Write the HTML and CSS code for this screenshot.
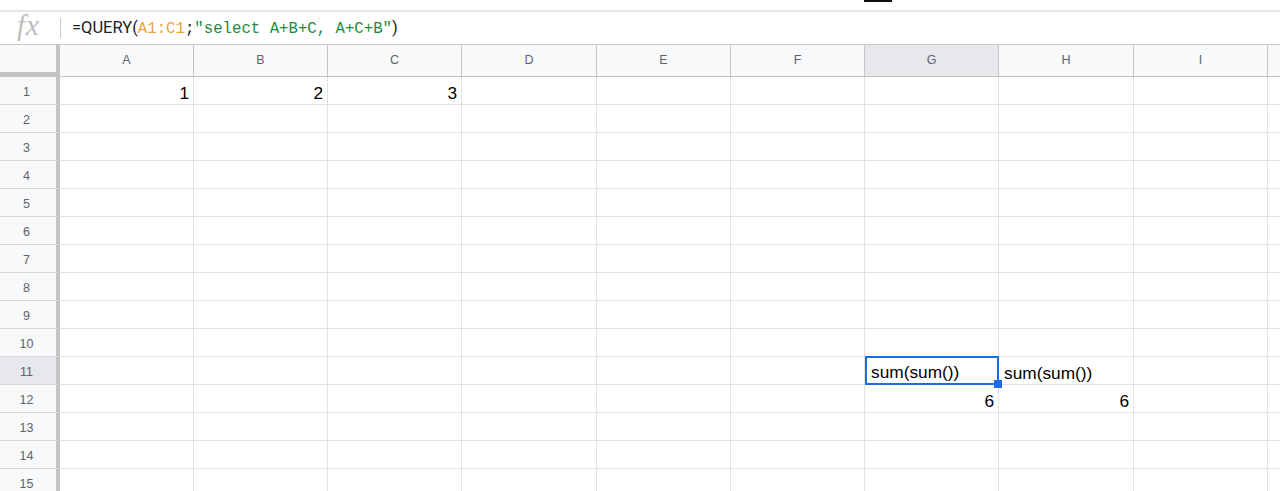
FILE: index.html
```html
<!DOCTYPE html>
<html>
<head>
<meta charset="utf-8">
<link rel="stylesheet" href="styles.css">
</head>
<body>
<div class="top"><div class="mark"></div></div>
<div class="fbar">
  <span class="fx">fx</span>
  <span class="sep"></span>
  <span class="formula">=QUERY(<span class="mono ref">A1:C1</span><span class="mono">;</span><span class="mono str">"select A+B+C, A+C+B"</span>)</span>
</div>
<div class="sheet">
  <div class="row hdr">
    <div class="corner"></div>
    <div class="ch">A</div><div class="ch">B</div><div class="ch">C</div><div class="ch w">D</div><div class="ch">E</div><div class="ch">F</div><div class="ch sel">G</div><div class="ch w">H</div><div class="ch">I</div><div class="ch last"></div>
  </div>
  <div class="row"><div class="rh">1</div><div class="c num">1</div><div class="c num">2</div><div class="c num">3</div><div class="c w"></div><div class="c"></div><div class="c"></div><div class="c"></div><div class="c w"></div><div class="c"></div><div class="c last"></div></div>
  <div class="row"><div class="rh">2</div><div class="c"></div><div class="c"></div><div class="c"></div><div class="c w"></div><div class="c"></div><div class="c"></div><div class="c"></div><div class="c w"></div><div class="c"></div><div class="c last"></div></div>
  <div class="row"><div class="rh">3</div><div class="c"></div><div class="c"></div><div class="c"></div><div class="c w"></div><div class="c"></div><div class="c"></div><div class="c"></div><div class="c w"></div><div class="c"></div><div class="c last"></div></div>
  <div class="row"><div class="rh">4</div><div class="c"></div><div class="c"></div><div class="c"></div><div class="c w"></div><div class="c"></div><div class="c"></div><div class="c"></div><div class="c w"></div><div class="c"></div><div class="c last"></div></div>
  <div class="row"><div class="rh">5</div><div class="c"></div><div class="c"></div><div class="c"></div><div class="c w"></div><div class="c"></div><div class="c"></div><div class="c"></div><div class="c w"></div><div class="c"></div><div class="c last"></div></div>
  <div class="row"><div class="rh">6</div><div class="c"></div><div class="c"></div><div class="c"></div><div class="c w"></div><div class="c"></div><div class="c"></div><div class="c"></div><div class="c w"></div><div class="c"></div><div class="c last"></div></div>
  <div class="row"><div class="rh">7</div><div class="c"></div><div class="c"></div><div class="c"></div><div class="c w"></div><div class="c"></div><div class="c"></div><div class="c"></div><div class="c w"></div><div class="c"></div><div class="c last"></div></div>
  <div class="row"><div class="rh">8</div><div class="c"></div><div class="c"></div><div class="c"></div><div class="c w"></div><div class="c"></div><div class="c"></div><div class="c"></div><div class="c w"></div><div class="c"></div><div class="c last"></div></div>
  <div class="row"><div class="rh">9</div><div class="c"></div><div class="c"></div><div class="c"></div><div class="c w"></div><div class="c"></div><div class="c"></div><div class="c"></div><div class="c w"></div><div class="c"></div><div class="c last"></div></div>
  <div class="row"><div class="rh">10</div><div class="c"></div><div class="c"></div><div class="c"></div><div class="c w"></div><div class="c"></div><div class="c"></div><div class="c"></div><div class="c w"></div><div class="c"></div><div class="c last"></div></div>
  <div class="row"><div class="rh sel">11</div><div class="c"></div><div class="c"></div><div class="c"></div><div class="c w"></div><div class="c"></div><div class="c"></div><div class="c active">sum(sum())<span class="handle"></span></div><div class="c w">sum(sum())</div><div class="c"></div><div class="c last"></div></div>
  <div class="row"><div class="rh">12</div><div class="c"></div><div class="c"></div><div class="c"></div><div class="c w"></div><div class="c"></div><div class="c"></div><div class="c num">6</div><div class="c w num">6</div><div class="c"></div><div class="c last"></div></div>
  <div class="row"><div class="rh">13</div><div class="c"></div><div class="c"></div><div class="c"></div><div class="c w"></div><div class="c"></div><div class="c"></div><div class="c"></div><div class="c w"></div><div class="c"></div><div class="c last"></div></div>
  <div class="row"><div class="rh">14</div><div class="c"></div><div class="c"></div><div class="c"></div><div class="c w"></div><div class="c"></div><div class="c"></div><div class="c"></div><div class="c w"></div><div class="c"></div><div class="c last"></div></div>
  <div class="row"><div class="rh">15</div><div class="c"></div><div class="c"></div><div class="c"></div><div class="c w"></div><div class="c"></div><div class="c"></div><div class="c"></div><div class="c w"></div><div class="c"></div><div class="c last"></div></div>
</div>
</body>
</html>
```
FILE: styles.css
```css
* { box-sizing: border-box; }
html, body {
  margin: 0;
  padding: 0;
  background: #fff;
  width: 1280px;
  height: 491px;
  overflow: hidden;
  font-family: "Liberation Sans", Arial, sans-serif;
}
.top {
  height: 12px;
  border-bottom: 2px solid #e6e6e6;
}
.mark {
  margin-left: 864px;
  width: 28px;
  height: 2px;
  background: #111;
}
.fbar {
  height: 32px;
  display: flex;
  align-items: center;
}
.fx {
  font-family: "Liberation Serif", "Times New Roman", serif;
  font-style: italic;
  font-size: 29px;
  color: #bcbcbc;
  width: 60px;
  padding-left: 17px;
  line-height: 1;
  margin-top: -5px;
  letter-spacing: 1px;
}
.sep {
  width: 1px;
  height: 20px;
  background: #c8c8c8;
}
.formula {
  margin-left: 11px;
  font-family: Roboto, "Liberation Sans", sans-serif;
  font-size: 16.5px;
  color: #202124;
  white-space: nowrap;
}
.mono {
  font-family: "Liberation Mono", "DejaVu Sans Mono", monospace;
  font-size: 15.7px;
}
.ref { color: #eaa43a; }
.str { color: #1f8a3c; }
.sheet {
  border-top: 1px solid #c8c8c8;
}
.row {
  display: flex;
  height: 28px;
}
.row.hdr { height: 32px; }
.corner {
  width: 60px;
  flex: none;
  background: #f8f9fa;
  border-right: 4px solid #c4c4c4;
  border-bottom: 5px solid #c4c4c4;
}
.ch {
  width: 134px;
  flex: none;
  background: #f8f9fa;
  border-right: 1px solid #c4c4c4;
  border-bottom: 1px solid #c4c4c4;
  display: flex;
  align-items: center;
  justify-content: center;
  font-size: 12.5px;
  color: #5f6368;
  padding-bottom: 1px;
}
.ch.w, .c.w { width: 135px; }
.ch.sel, .rh.sel { background: #e6e8eb; }
.ch.last, .c.last { flex: 1; width: auto; border-right: none; }
.rh {
  width: 60px;
  flex: none;
  background: #f8f9fa;
  border-right: 4px solid #c4c4c4;
  border-bottom: 1px solid #d6d6d6;
  display: flex;
  align-items: center;
  justify-content: center;
  font-size: 12.5px;
  color: #5f6368;
  padding-right: 3px;
  padding-top: 2px;
}
.c {
  width: 134px;
  flex: none;
  border-right: 1px solid #e2e2e2;
  border-bottom: 1px solid #e2e2e2;
  display: flex;
  align-items: flex-end;
  font-size: 17.3px;
  color: #000;
  padding: 0 5px 1px 5px;
  line-height: 20px;
  white-space: nowrap;
}
.c.num { justify-content: flex-end; padding-right: 4px; }
.c.active {
  position: relative;
  border: 2px solid #1a6fe0;
  margin-top: -1px;
  height: 29px;
  padding-left: 4px;
  padding-bottom: 1px;
}
.handle {
  position: absolute;
  right: -5px;
  bottom: -5px;
  width: 8px;
  height: 8px;
  background: #1a6fe0;
}
```
